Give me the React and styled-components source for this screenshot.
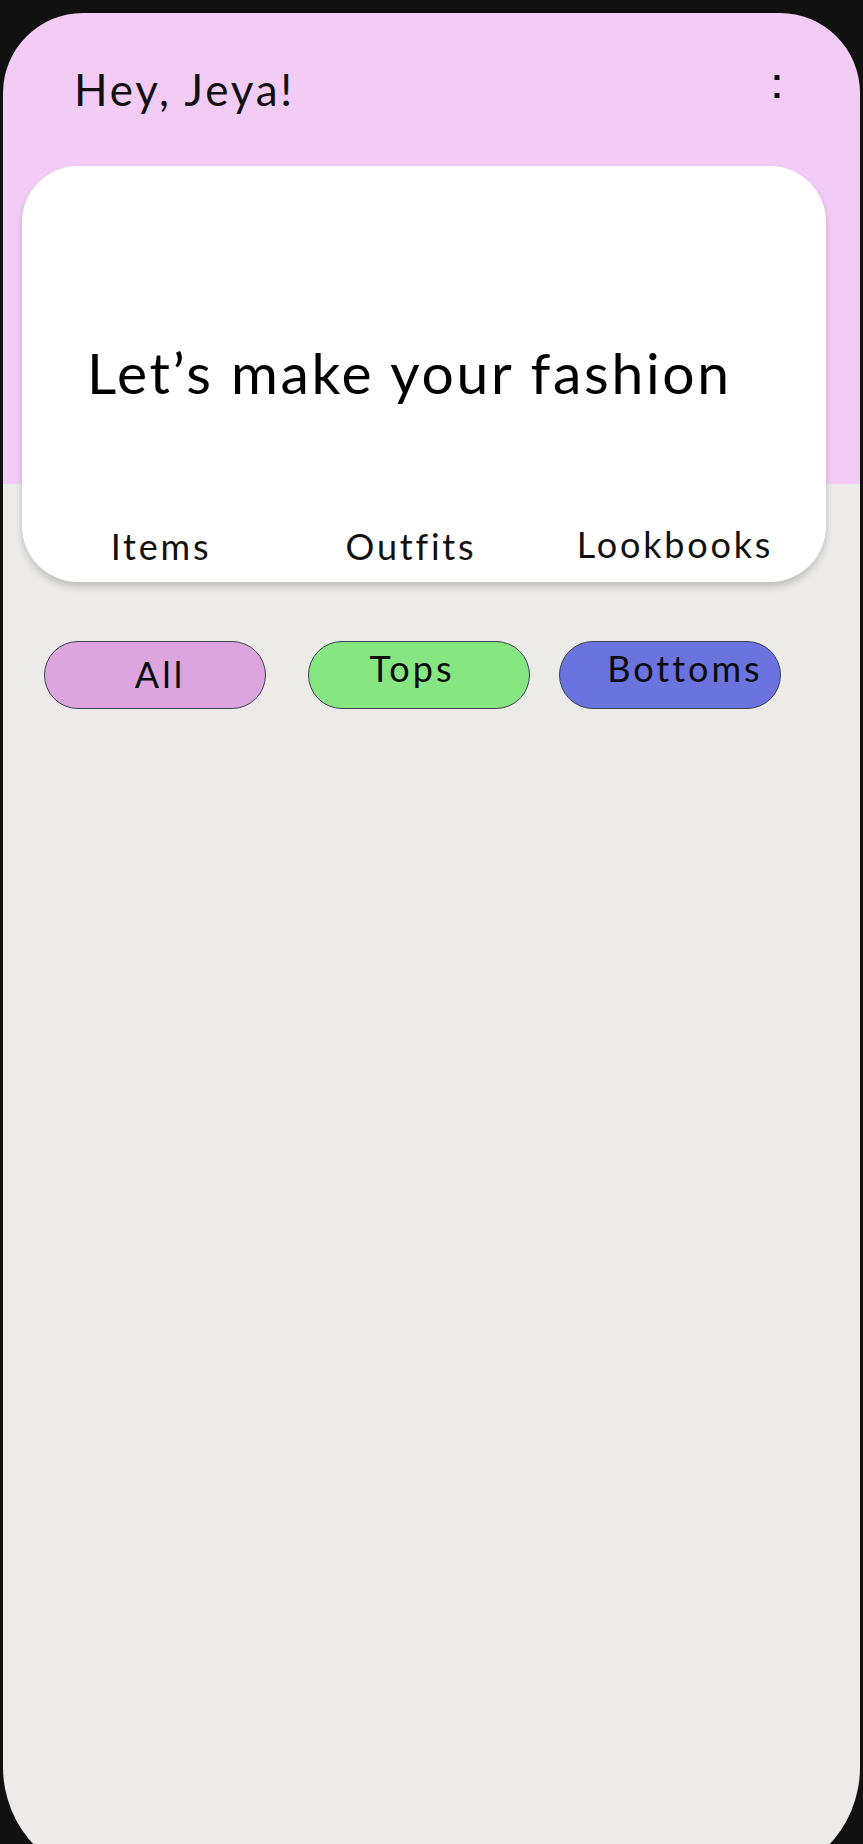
import React from "react";
import styled, { createGlobalStyle } from "styled-components";

const Global = createGlobalStyle`
  html, body { margin: 0; padding: 0; background: #111111; overflow: hidden; }
  body { font-family: "Lato", "Open Sans", sans-serif; }
`;

const Phone = styled.div`
  margin: 13px 3px 0 3px;
  height: 1868px;
  border-radius: 80px 80px 114px 114px;
  overflow: hidden;
  background: linear-gradient(to bottom, #f2ccf5 0, #f2ccf5 471px, #ecebe7 471px);
  display: flex;
  flex-direction: column;
`;

const TopBar = styled.header`
  display: flex;
  align-items: flex-start;
  justify-content: space-between;
  padding: 54px 80px 0 71px;
  height: 99px;
`;

const Greeting = styled.h1`
  margin: 0;
  font-family: "Lato", sans-serif;
  font-weight: 400;
  font-size: 44px;
  line-height: 1;
  letter-spacing: 2.8px;
  color: #111;
`;

const MenuButton = styled.button`
  border: 0;
  background: transparent;
  padding: 0;
  margin-top: 8px;
  width: 6px;
  height: 24px;
  display: flex;
  cursor: pointer;
`;

const Card = styled.section`
  margin: 0 34px 0 19px;
  height: 416px;
  box-sizing: border-box;
  background: #ffffff;
  border-radius: 56px;
  box-shadow: 0 5px 7px rgba(0, 0, 0, 0.18);
  padding: 178px 0 18px 0;
  display: flex;
  flex-direction: column;
`;

const Headline = styled.h2`
  margin: 0 0 0 65px;
  font-family: "Lato", sans-serif;
  font-weight: 400;
  font-size: 57px;
  line-height: 1;
  letter-spacing: 2.7px;
  color: #000;
`;

const Tabs = styled.nav`
  margin-top: 127px;
  display: grid;
  grid-template-columns: 198px 302px 226px;
  padding-left: 40px;
`;

const Tab = styled.span`
  text-align: center;
  font-family: "Lato", sans-serif;
  font-size: 36px;
  line-height: 1;
  letter-spacing: 2.8px;
  color: #111;
  margin-top: ${(p) => (p.$lift ? -2 : 0)}px;
`;

const Filters = styled.div`
  margin: 59px 0 0 41px;
  display: flex;
`;

const Pill = styled.button`
  box-sizing: border-box;
  width: 222px;
  height: 68px;
  margin-left: ${(p) => p.$ml}px;
  border: 1.6px solid #3b4252;
  border-radius: 34px;
  background: ${(p) => p.$bg};
  font-family: "Lato", sans-serif;
  font-size: 36px;
  line-height: 1;
  letter-spacing: 3px;
  color: #0c0c0c;
  display: flex;
  align-items: flex-start;
  justify-content: center;
  padding: ${(p) => p.$pt}px ${(p) => (p.$dx < 0 ? -2 * p.$dx : 0)}px 0
    ${(p) => (p.$dx > 0 ? 2 * p.$dx : 0)}px;
  cursor: pointer;
`;

function Kebab() {
  return (
    <svg width="6" height="24" viewBox="0 0 6 24">
      <rect x="0.5" y="0" width="5" height="5" fill="#111" />
      <rect x="0.5" y="18" width="5" height="5" fill="#111" />
    </svg>
  );
}

export default function App() {
  return (
    <>
      <Global />
      <Phone>
        <TopBar>
          <Greeting>Hey, Jeya!</Greeting>
          <MenuButton aria-label="menu">
            <Kebab />
          </MenuButton>
        </TopBar>
        <Card>
          <Headline>Let’s make your fashion</Headline>
          <Tabs>
            <Tab>Items</Tab>
            <Tab>Outfits</Tab>
            <Tab $lift>Lookbooks</Tab>
          </Tabs>
        </Card>
        <Filters>
          <Pill $bg="#dda5de" $ml={0} $pt={14} $dx={5}>All</Pill>
          <Pill $bg="#86e682" $ml={42} $pt={8} $dx={-7}>Tops</Pill>
          <Pill $bg="#6a73de" $ml={29} $pt={8} $dx={15}>Bottoms</Pill>
        </Filters>
      </Phone>
    </>
  );
}
